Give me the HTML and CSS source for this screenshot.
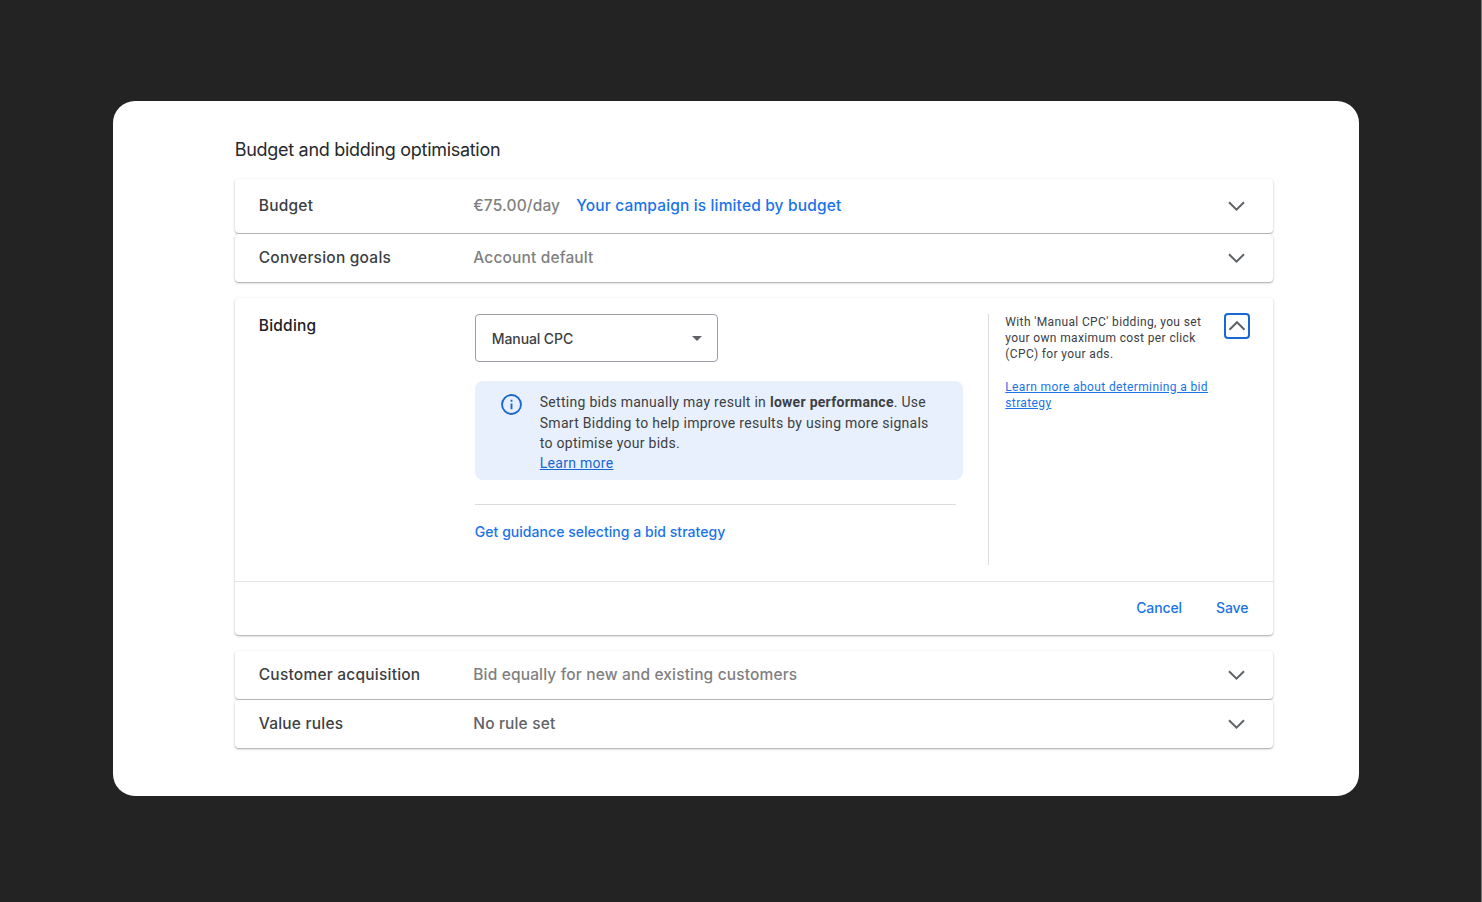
FILE: index.html
```
<!DOCTYPE html>
<html lang="en-GB">
<head>
    <meta charset="UTF-8">
    <meta name="viewport" content="width=device-width, initial-scale=1.0">
    <title>Campaign settings</title>
    <link rel="stylesheet" href="styles.css">
</head>
<body>

<main class="sheet">
    <h1 class="title">Budget and bidding optimisation</h1>

    <div class="group">
        <section class="card row row-tall">
            <span class="label">Budget</span>
            <span class="value">€75.00/day</span>
            <a class="notice">Your campaign is limited by budget</a>
            <svg class="chevron" viewBox="0 0 26 26"><path d="M6 9.2 13.5 16.7 21 9.2"/></svg>
        </section>
        <section class="card row">
            <span class="label">Conversion goals</span>
            <span class="value">Account default</span>
            <svg class="chevron" viewBox="0 0 26 26"><path d="M6 9.2 13.5 16.7 21 9.2"/></svg>
        </section>
    </div>

    <section class="card bidding">
        <div class="bidding-body">
            <h2 class="label label-open">Bidding</h2>
            <div class="settings">
                <div class="select">
                    <span>Manual CPC</span>
                    <svg class="caret" viewBox="0 0 10 5"><path d="M0 0h10L5 5z"/></svg>
                </div>
                <div class="alert">
                    <svg class="info" viewBox="0 0 20 20">
                        <circle cx="10" cy="10" r="9"/>
                        <path d="M10 9v5.6M10 5.4v2"/>
                    </svg>
                    <p>Setting bids manually may result in <b>lower performance</b>. Use<br>
                        Smart Bidding to help improve results by using more signals<br>
                        to optimise your bids.<br>
                        <a>Learn more</a></p>
                </div>
                <hr class="divider">
                <a class="guidance">Get guidance selecting a bid strategy</a>
            </div>
            <aside class="help">
                <p>With 'Manual CPC' bidding, you set<br>your own maximum cost per click<br>(CPC) for your ads.</p>
                <a>Learn more about determining a bid<br>strategy</a>
            </aside>
            <button class="collapse" aria-label="Collapse">
                <svg class="chevron" viewBox="0 0 26 26"><path d="M5.5 16.7 13 9.2l7.5 7.5"/></svg>
            </button>
        </div>
        <div class="actions">
            <a>Cancel</a>
            <a>Save</a>
        </div>
    </section>

    <div class="group">
        <section class="card row">
            <span class="label">Customer acquisition</span>
            <span class="value">Bid equally for new and existing customers</span>
            <svg class="chevron" viewBox="0 0 26 26"><path d="M6 9.2 13.5 16.7 21 9.2"/></svg>
        </section>
        <section class="card row">
            <span class="label">Value rules</span>
            <span class="value value-dark">No rule set</span>
            <svg class="chevron" viewBox="0 0 26 26"><path d="M6 9.2 13.5 16.7 21 9.2"/></svg>
        </section>
    </div>
</main>

</body>
</html>
```

FILE: styles.css
```
* {
    margin: 0;
    padding: 0;
    box-sizing: border-box;
}

body {
    height: 902px;
    padding: 100.5px 0 0 113.4px;
    background: #232323;
    border-right: 1px solid #777;
    font-family: Inter, "Liberation Sans", sans-serif;
    color: #3c4043;
}

/* White sheet */
.sheet {
    width: 1246px;
    height: 695.5px;
    padding: 36.5px 86px 0 121.4px;
    background: #fff;
    border-radius: 22px;
}

.title {
    height: 41.8px;
    font-size: 18px;
    font-weight: 400;
    line-height: 26px;
    letter-spacing: -0.3px;
    white-space: nowrap;
    color: #27292c;
}

/* Cards */
.card {
    background: #fff;
    border-radius: 4px;
    box-shadow: 0 1px 1px rgba(0, 0, 0, 0.17), 0 1px 3px rgba(0, 0, 0, 0.22);
}

.group {
    display: flex;
    flex-direction: column;
    gap: 1px;
}

.row {
    display: flex;
    align-items: center;
    height: 48px;
    padding: 0 24px;
    font-size: 15.5px;
    font-weight: 500;
    line-height: 20px;
    letter-spacing: 0.15px;
    white-space: nowrap;
}

.row-tall {
    height: 54px;
}

.label {
    width: 214.5px;
    flex: none;
    font-size: 15.5px;
    font-weight: 500;
    letter-spacing: 0.22px;
}

.value {
    color: #808080;
}

.value-dark {
    color: #5f6368;
}

.notice {
    margin-left: 16px;
    color: #1a73e8;
}

.chevron {
    display: block;
    flex: none;
    width: 26px;
    height: 26px;
    margin-left: auto;
    fill: none;
    stroke: #5f6368;
    stroke-width: 2;
}

/* Expanded bidding card */
.bidding {
    margin: 16px 0;
}

.bidding-body {
    display: flex;
    align-items: flex-start;
    height: 283px;
    padding: 16px 23.5px 0 24px;
}

.label-open {
    width: 216px;
    line-height: 24px;
    color: #202124;
}

.settings {
    width: 488.5px;
    flex: none;
}

.select {
    display: flex;
    align-items: center;
    justify-content: space-between;
    width: 243px;
    height: 48px;
    padding: 1px 15px 0 16px;
    border: 1px solid #9aa0a6;
    border-radius: 4px;
    font-size: 14px;
    font-weight: 500;
    letter-spacing: -0.1px;
}

.caret {
    width: 10px;
    height: 5px;
    fill: #5f6368;
}

.alert {
    display: flex;
    height: 99px;
    margin-top: 19px;
    padding: 11.5px 0 0 26px;
    background: #e8f0fe;
    border-radius: 8px;
    font: 400 14px/20.3px Roboto, sans-serif;
    letter-spacing: 0.28px;
    white-space: nowrap;
}

.info {
    width: 21px;
    height: 21px;
    margin: 2px 18px 0 0;
    fill: none;
    stroke: #1967d2;
    stroke-width: 1.8;
}

.alert a {
    color: #1967d2;
    text-decoration: underline;
}

.divider {
    width: 481px;
    height: 1px;
    margin-top: 24px;
    border: 0;
    background: #dadce0;
}

.guidance {
    display: block;
    margin-top: 17px;
    font-size: 14px;
    font-weight: 500;
    line-height: 20px;
    letter-spacing: 0.04px;
    color: #1a73e8;
}

.help {
    flex: none;
    width: 234px;
    height: 251px;
    margin-left: 25px;
    padding-left: 16px;
    border-left: 1px solid #dadce0;
    font: 400 12px/16.3px Roboto, sans-serif;
    letter-spacing: 0.37px;
    white-space: nowrap;
}

.help p {
    margin-bottom: 16px;
}

.help a {
    color: #1a73e8;
    text-decoration: underline;
}

.collapse {
    flex: none;
    width: 26px;
    height: 26px;
    margin-left: auto;
    margin-top: -1px;
    background: none;
    border: 2px solid #1967d2;
    border-radius: 4px;
}

.collapse .chevron {
    margin: -2px;
}

.actions {
    display: flex;
    align-items: center;
    justify-content: flex-end;
    gap: 34px;
    height: 54px;
    padding: 0 25px 1px;
    border-top: 1px solid #e4e5e7;
    font-size: 14px;
    font-weight: 500;
    letter-spacing: -0.1px;
    color: #1a73e8;
}
```
